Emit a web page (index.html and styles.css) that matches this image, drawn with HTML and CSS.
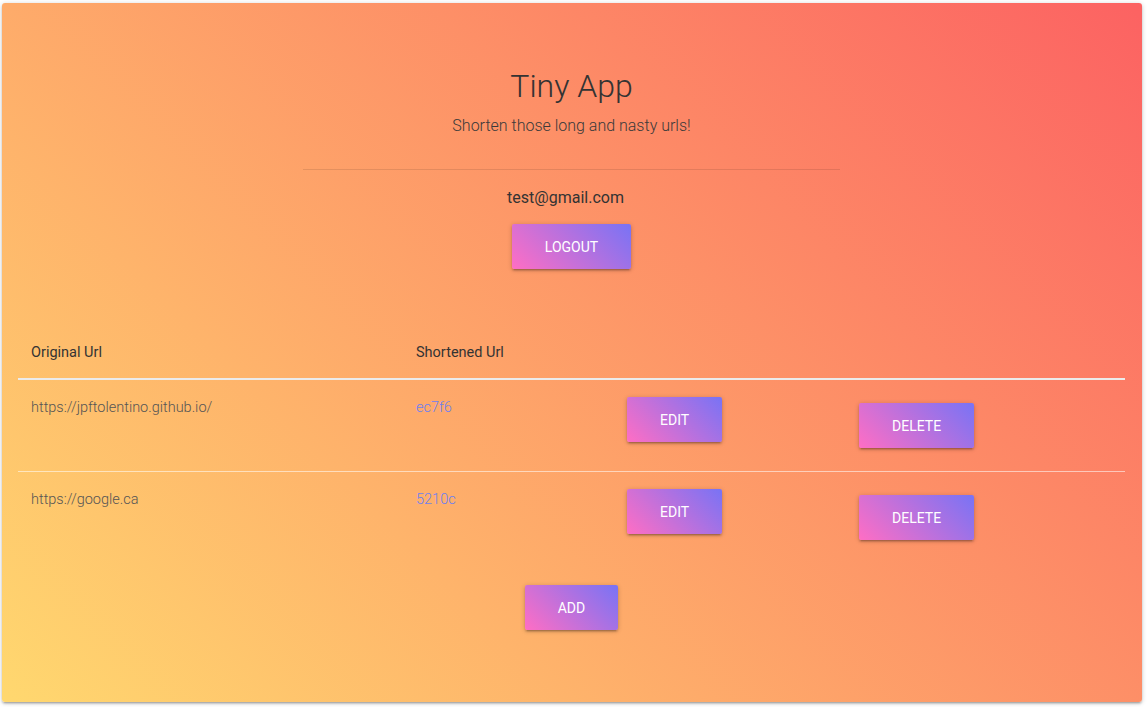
FILE: index.html
```html
<!DOCTYPE html>
<html>
<head>
<meta charset="utf-8">
<title>Tiny App</title>
<link rel="stylesheet" href="styles.css">
</head>
<body>
<div class="card">
  <header class="hero">
    <h1 class="title">Tiny App</h1>
    <p class="subtitle">Shorten those long and nasty urls!</p>
    <hr class="divider">
    <p class="email">test@gmail.com</p>
    <button class="btn">Logout</button>
  </header>

  <section class="urls">
    <div class="row head">
      <div class="cell">Original Url</div>
      <div class="cell">Shortened Url</div>
      <div class="cell"></div>
      <div class="cell"></div>
    </div>
    <div class="row item">
      <div class="cell url">https://jpftolentino.github.io/</div>
      <div class="cell"><a class="short" href="#">ec7f6</a></div>
      <div class="cell"><button class="btn edit">Edit</button></div>
      <div class="cell"><button class="btn delete">Delete</button></div>
    </div>
    <div class="row item last">
      <div class="cell url">https://google.ca</div>
      <div class="cell"><a class="short" href="#">5210c</a></div>
      <div class="cell"><button class="btn edit">Edit</button></div>
      <div class="cell"><button class="btn delete">Delete</button></div>
    </div>
  </section>

  <div class="add-wrap">
    <button class="btn">Add</button>
  </div>
</div>
</body>
</html>
```

FILE: styles.css
```css
* { box-sizing: border-box; }

html, body {
  margin: 0;
  padding: 0;
  background: #ffffff;
}

body {
  font-family: Roboto, "Noto Sans", sans-serif;
  color: #333;
}

.card {
  margin: 3px 5px 5px 2px;
  height: 699px;
  padding: 0 17px 0 16px;
  border-radius: 3px;
  background: linear-gradient(45deg, #ffd86f, #fc6262);
  box-shadow: 0 2px 2px 0 rgba(0,0,0,0.14), 0 3px 1px -2px rgba(0,0,0,0.12), 0 1px 5px 0 rgba(0,0,0,0.2);
}

.hero {
  display: flex;
  flex-direction: column;
  align-items: center;
  padding-top: 64px;
}

.title {
  margin: 0;
  font-size: 32px;
  line-height: 38px;
  font-weight: 300;
  color: #333;
}

.subtitle {
  margin: 11px 0 0;
  font-size: 16px;
  line-height: 19px;
  font-weight: 300;
  color: #3a3a3a;
}

.divider {
  width: 537px;
  margin: 34px 0 0;
  border: 0;
  border-top: 1px solid rgba(0,0,0,0.1);
  height: 0;
}

.email {
  margin: 18px 12px 0 0;
  font-size: 16px;
  line-height: 19px;
  font-weight: 400;
  color: #333;
}

.btn {
  height: 45px;
  padding: 0 33px;
  border: 0;
  border-radius: 2px;
  background: linear-gradient(45deg, #ff6ec4, #7873f5);
  color: #fff;
  font-family: Roboto, "Noto Sans", sans-serif;
  font-size: 14px;
  font-weight: 400;
  text-transform: uppercase;
  box-shadow: 0 2px 2px 0 rgba(0,0,0,0.14), 0 3px 1px -2px rgba(0,0,0,0.12), 0 1px 5px 0 rgba(0,0,0,0.2);
  cursor: pointer;
}

.hero .btn { margin-top: 17px; }

.urls {
  margin-top: 58px;
}

.row {
  display: grid;
  grid-template-columns: 385px 211px 232px 1fr;
}

.cell {
  padding-left: 13px;
  font-size: 14.5px;
  line-height: 22px;
}

.head {
  border-bottom: 2px solid #ebebeb;
}

.head .cell {
  padding-top: 15px;
  padding-bottom: 14px;
  color: #333;
  font-weight: 400;
}

.item {
  height: 92px;
  border-bottom: 1px solid rgba(255,255,255,0.55);
}

.item.last { border-bottom: 0; height: 91px; }

.item .cell { padding-top: 17px; }

.url {
  font-weight: 300;
  color: #555;
}

.short {
  font-weight: 300;
  color: #6c7ff2;
  text-decoration: none;
}

.item .cell .edit { margin-top: 0; }
.item .cell .delete { margin-top: 6px; }

.add-wrap {
  display: flex;
  justify-content: center;
  margin-top: 22px;
}
```
